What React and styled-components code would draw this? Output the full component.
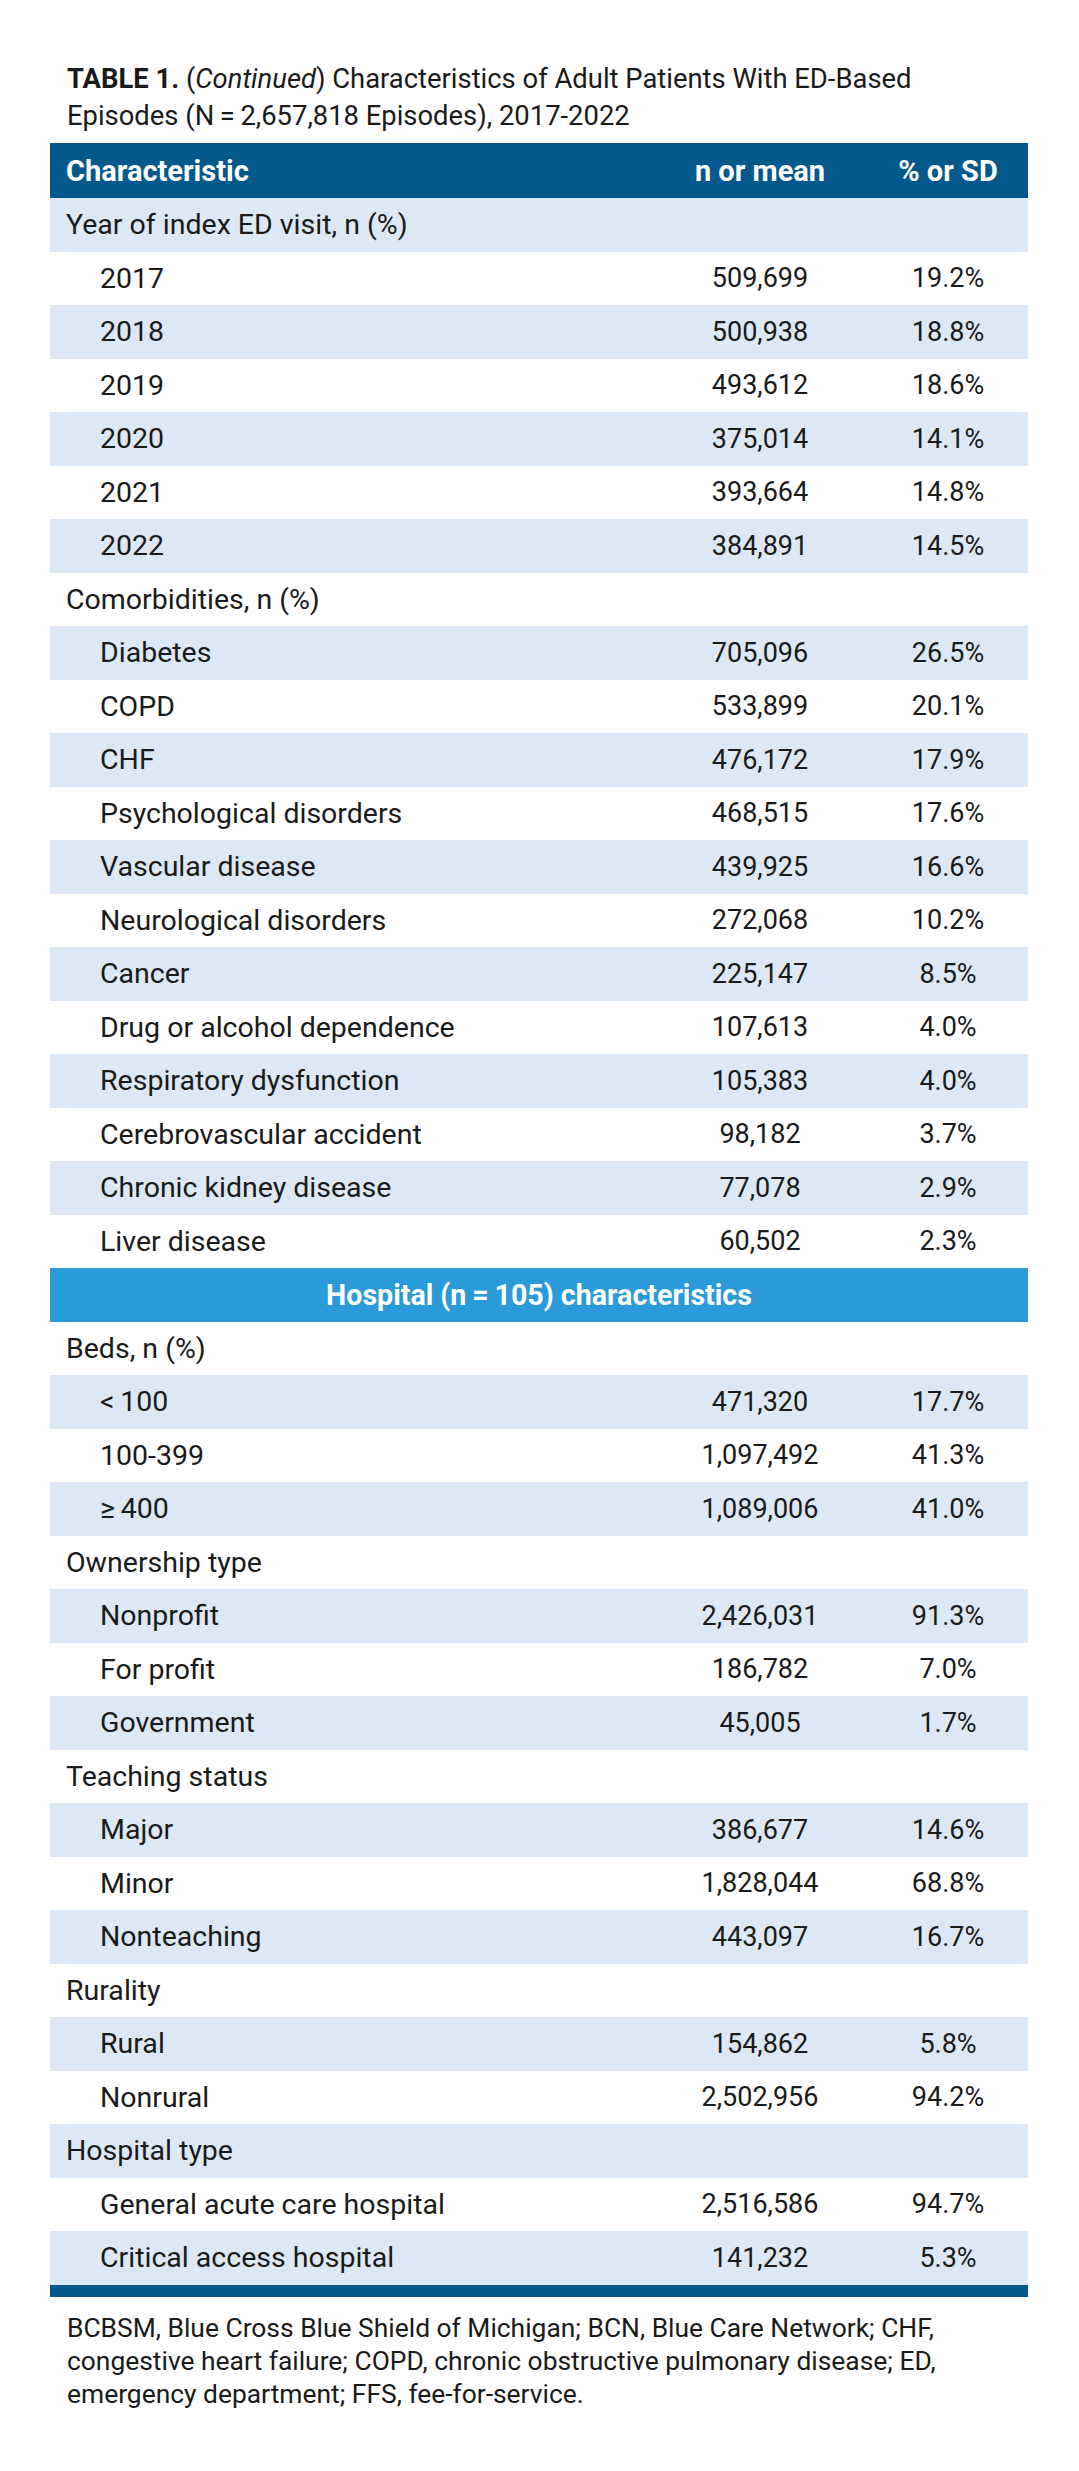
import React from "react";
import styled, { createGlobalStyle } from "styled-components";

const GlobalStyle = createGlobalStyle`
  html, body {
    margin: 0;
    padding: 0;
    background: #ffffff;
  }
  body {
    font-family: Roboto, "Noto Sans", "Liberation Sans", sans-serif;
    color: #1a1a1a;
  }
`;

const Page = styled.div`
  width: 1079px;
  padding: 61px 0 40px 0;
  box-sizing: border-box;
`;

const Caption = styled.div`
  margin: 0 51px 0 67px;
  font-size: 27.4px;
  line-height: 37px;
  color: #1a1a1a;
`;

const CaptionLabel = styled.b`
  font-weight: 700;
`;

const Table = styled.div`
  margin: 8px 51px 0 50px;
  display: flex;
  flex-direction: column;
`;

const Row = styled.div`
  display: grid;
  grid-template-columns: 1fr 180px 160px;
  column-gap: 18px;
  align-items: center;
  height: 53.5px;
  font-size: 28.5px;
  background: ${(p) => (p.$shade ? "#dce8f5" : "#ffffff")};
`;

const HeadRow = styled(Row)`
  height: 55px;
  background: #04598c;
  color: #ffffff;
  font-weight: 700;
  font-size: 29px;
`;

const Banner = styled.div`
  height: 53.5px;
  display: flex;
  align-items: center;
  justify-content: center;
  background: #2a9bd8;
  color: #ffffff;
  font-size: 28.6px;
  font-weight: 700;
`;

const Label = styled.div`
  padding-left: ${(p) => (p.$sub ? "50px" : "16px")};
  white-space: nowrap;
`;

const Num = styled.div`
  text-align: center;
  white-space: nowrap;
  font-size: ${(p) => (p.$head ? "29px" : "27px")};
`;

const EndBar = styled.div`
  height: 12px;
  background: #04598c;
`;

const Footnote = styled.div`
  margin: 15px 30px 0 67px;
  font-size: 26.4px;
  line-height: 33px;
  white-space: nowrap;
`;

const T = "\u2009";

const patientRows = [
  { label: "Year of index ED visit, n (%)" },
  { label: "2017", n: "509,699", p: "19.2%", sub: true },
  { label: "2018", n: "500,938", p: "18.8%", sub: true },
  { label: "2019", n: "493,612", p: "18.6%", sub: true },
  { label: "2020", n: "375,014", p: "14.1%", sub: true },
  { label: "2021", n: "393,664", p: "14.8%", sub: true },
  { label: "2022", n: "384,891", p: "14.5%", sub: true },
  { label: "Comorbidities, n (%)" },
  { label: "Diabetes", n: "705,096", p: "26.5%", sub: true },
  { label: "COPD", n: "533,899", p: "20.1%", sub: true },
  { label: "CHF", n: "476,172", p: "17.9%", sub: true },
  { label: "Psychological disorders", n: "468,515", p: "17.6%", sub: true },
  { label: "Vascular disease", n: "439,925", p: "16.6%", sub: true },
  { label: "Neurological disorders", n: "272,068", p: "10.2%", sub: true },
  { label: "Cancer", n: "225,147", p: "8.5%", sub: true },
  { label: "Drug or alcohol dependence", n: "107,613", p: "4.0%", sub: true },
  { label: "Respiratory dysfunction", n: "105,383", p: "4.0%", sub: true },
  { label: "Cerebrovascular accident", n: "98,182", p: "3.7%", sub: true },
  { label: "Chronic kidney disease", n: "77,078", p: "2.9%", sub: true },
  { label: "Liver disease", n: "60,502", p: "2.3%", sub: true },
];

const hospitalRows = [
  { label: "Beds, n (%)" },
  { label: `<${T}100`, n: "471,320", p: "17.7%", sub: true },
  { label: "100-399", n: "1,097,492", p: "41.3%", sub: true },
  { label: `≥${T}400`, n: "1,089,006", p: "41.0%", sub: true },
  { label: "Ownership type" },
  { label: "Nonprofit", n: "2,426,031", p: "91.3%", sub: true },
  { label: "For profit", n: "186,782", p: "7.0%", sub: true },
  { label: "Government", n: "45,005", p: "1.7%", sub: true },
  { label: "Teaching status" },
  { label: "Major", n: "386,677", p: "14.6%", sub: true },
  { label: "Minor", n: "1,828,044", p: "68.8%", sub: true },
  { label: "Nonteaching", n: "443,097", p: "16.7%", sub: true },
  { label: "Rurality" },
  { label: "Rural", n: "154,862", p: "5.8%", sub: true },
  { label: "Nonrural", n: "2,502,956", p: "94.2%", sub: true },
  { label: "Hospital type" },
  { label: "General acute care hospital", n: "2,516,586", p: "94.7%", sub: true },
  { label: "Critical access hospital", n: "141,232", p: "5.3%", sub: true },
];

const DataRow = ({ row, shade }) => (
  <Row $shade={shade}>
    <Label $sub={row.sub}>{row.label}</Label>
    <Num>{row.n}</Num>
    <Num>{row.p}</Num>
  </Row>
);

const App = () => {
  return (
    <Page>
      <GlobalStyle />
      <Caption>
        <CaptionLabel>TABLE 1.</CaptionLabel> (<i>Continued</i>) Characteristics of Adult Patients With ED-Based
        <br />
        Episodes (N{T}={T}2,657,818 Episodes), 2017-2022
      </Caption>
      <Table>
        <HeadRow>
          <Label>Characteristic</Label>
          <Num $head>n or mean</Num>
          <Num $head>% or SD</Num>
        </HeadRow>
        {patientRows.map((row, i) => (
          <DataRow key={"a" + i} row={row} shade={i % 2 === 0} />
        ))}
        <Banner>Hospital (n{T}={T}105) characteristics</Banner>
        {hospitalRows.map((row, i) => (
          <DataRow key={"b" + i} row={row} shade={i % 2 === 1} />
        ))}
        <EndBar />
      </Table>
      <Footnote>
        BCBSM, Blue Cross Blue Shield of Michigan; BCN, Blue Care Network; CHF,
        <br />
        congestive heart failure; COPD, chronic obstructive pulmonary disease; ED,
        <br />
        emergency department; FFS, fee-for-service.
      </Footnote>
    </Page>
  );
};

export default App;
